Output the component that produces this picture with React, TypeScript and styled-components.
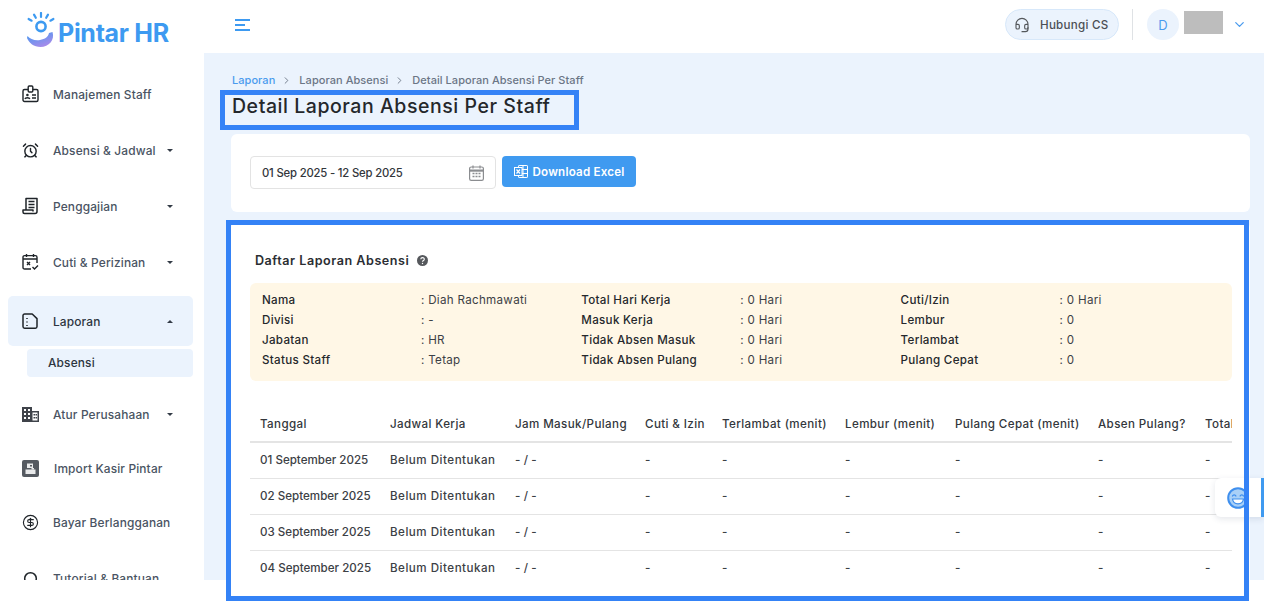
import React from "react";
import styled, { createGlobalStyle } from "styled-components";
import { AlarmClock, ChevronDown, ChevronRight, CircleDollarSign, Headset } from "lucide-react";

const GlobalStyle = createGlobalStyle`
  html, body {
    margin: 0;
    padding: 0;
    background: #fff;
    font-family: Inter, "Noto Sans", sans-serif;
  }
  * { box-sizing: border-box; }
`;

const Page = styled.div`
  position: relative;
  width: 1264px;
  height: 609px;
  overflow: hidden;
  background: #fff;
`;

const Frame = styled.div`
  display: flex;
  height: 580px;
  overflow: hidden;
`;

/* sidebar */
const Sidebar = styled.aside`
  flex: 0 0 204px;
  height: 580px;
  overflow: hidden;
  background: #fff;
`;

const LogoRow = styled.div`
  display: flex;
  align-items: flex-start;
  height: 66px;
  padding: 12px 0 0 26px;
`;

const LogoText = styled.span`
  margin: 6px 0 0 2px;
  font-size: 25px;
  line-height: 30px;
  font-weight: 700;
  letter-spacing: -0.3px;
  color: #3d9af1;
`;

const NavItem = styled.div<{ $h?: number; $active?: boolean; $mt?: number }>`
  display: flex;
  align-items: center;
  height: ${(p) => p.$h ?? 54}px;
  margin: ${(p) => p.$mt ?? 0}px 11px 0 8px;
  padding: 0 18px 0 14px;
  border-radius: 5px;
  background: ${(p) => (p.$active ? "#ebf3fd" : "transparent")};
  color: #1f2429;
`;

const NavIcon = styled.span`
  display: flex;
  width: 17px;
  height: 18px;
  align-items: center;
  justify-content: center;
  flex: none;
`;

const NavLabel = styled.span<{ $dark?: boolean; $x?: number }>`
  margin-left: ${(p) => p.$x ?? 14}px;
  font-size: 11.9px;
  font-weight: 500;
  letter-spacing: 0.15px;
  white-space: nowrap;
  color: ${(p) => (p.$dark ? "#2d3540" : "#4a5463")};
`;

const Caret = styled.span<{ $up?: boolean }>`
  margin-left: auto;
  margin-right: 2px;
  width: 0;
  height: 0;
  border-left: 3px solid transparent;
  border-right: 3px solid transparent;
  ${(p) => (p.$up ? "border-bottom: 3px solid #333b46;" : "border-top: 3px solid #333b46;")}
`;

const SubItem = styled.div`
  display: flex;
  align-items: center;
  height: 28px;
  margin: 3px 11px 10px 27px;
  padding: 0 0 2px 21px;
  border-radius: 4px;
  background: #ebf3fd;
  font-size: 11.9px;
  font-weight: 500;
  letter-spacing: 0.15px;
  color: #2d3540;
`;

/* main column */
const Main = styled.div`
  flex: 1;
  min-width: 0;
  display: flex;
  flex-direction: column;
`;

const Topbar = styled.header`
  display: flex;
  align-items: center;
  flex: 0 0 53px;
  padding: 0 17px 4px 31px;
  background: #fff;
`;

const MenuButton = styled.div`
  display: flex;
  flex-direction: column;
  gap: 3px;
  width: 15px;
`;

const MenuLine = styled.i<{ $w: number }>`
  display: block;
  width: ${(p) => p.$w}px;
  height: 2px;
  background: #3d9af1;
`;

const TopRight = styled.div`
  display: flex;
  align-items: center;
  margin-left: auto;
`;

const CsPill = styled.div`
  display: flex;
  align-items: center;
  width: 114px;
  height: 31px;
  padding-left: 8px;
  gap: 10px;
  border: 1px solid #d7e8fa;
  border-radius: 16px;
  background: #ebf3fd;
  font-size: 11.6px;
  font-weight: 500;
  letter-spacing: 0.25px;
  color: #4b4f55;
`;

const Divider = styled.div`
  width: 1px;
  height: 31px;
  margin: 0 14px 0 13px;
  background: #dfe2e5;
`;

const Avatar = styled.div`
  display: flex;
  align-items: center;
  justify-content: center;
  width: 32px;
  height: 31px;
  border-radius: 50%;
  background: #ebf3fd;
  font-size: 13px;
  color: #4a9bee;
`;

const UserMask = styled.div`
  width: 39px;
  height: 23px;
  margin: 0 9px 4px 5px;
  background: #bdbdbd;
`;

const Content = styled.main`
  flex: 1;
  padding: 20px 14px 0 27px;
  background: #ebf3fd;
  overflow: hidden;
`;

const Crumbs = styled.nav`
  display: flex;
  align-items: center;
  height: 14px;
  margin-left: 1px;
  font-size: 11px;
  font-weight: 500;
  letter-spacing: 0.05px;
  color: #6b7686;
`;

const CrumbLink = styled.span`
  color: #4a9bee;
`;

const CrumbSep = styled.span`
  display: flex;
  margin: 0 7px 0 6px;
  color: #6b7686;
`;

const Title = styled.h1`
  margin: 6px 0 0 1px;
  height: 27px;
  font-size: 19.5px;
  line-height: 27px;
  font-weight: 500;
  letter-spacing: 0.55px;
  white-space: nowrap;
  color: #24272b;
`;

const Card = styled.section`
  background: #fff;
  border-radius: 6px;
`;

const FilterCard = styled(Card)`
  display: flex;
  align-items: flex-start;
  gap: 6px;
  height: 78px;
  margin-top: 14px;
  padding: 22px 19px;
`;

const DateInput = styled.div`
  display: flex;
  align-items: center;
  justify-content: space-between;
  width: 246px;
  height: 33px;
  padding: 0 11px 0 11px;
  border: 1px solid #e3e3e3;
  border-radius: 4px;
  font-size: 11.3px;
  font-weight: 500;
  letter-spacing: -0.18px;
  color: #32363b;
`;

const DownloadButton = styled.div`
  display: flex;
  align-items: center;
  justify-content: center;
  gap: 5px;
  width: 134px;
  height: 31px;
  border-radius: 4px;
  background: #3f9af0;
  font-size: 11.6px;
  font-weight: 600;
  letter-spacing: 0.2px;
  color: #fff;
`;

const ListCard = styled(Card)`
  margin-top: 10px;
  height: 400px;
  padding: 28px 18px 0 19px;
`;

const ListTitle = styled.h2`
  display: flex;
  align-items: center;
  gap: 8px;
  height: 20px;
  margin: 0 0 0 5px;
  font-size: 12.6px;
  font-weight: 600;
  letter-spacing: 0.52px;
  color: #2b2e33;
`;

const InfoBox = styled.div`
  display: grid;
  grid-template-columns: repeat(3, 319.3px);
  margin-top: 13px;
  width: 982px;
  height: 98px;
  padding: 7px 12px;
  border-radius: 6px;
  background: #fff7e6;
`;

const InfoColumn = styled.dl`
  display: grid;
  grid-template-columns: 159px 1fr;
  grid-auto-rows: 20px;
  align-items: center;
  margin: 0;
`;

const InfoLabel = styled.dt`
  font-size: 11.6px;
  font-weight: 500;
  letter-spacing: 0.3px;
  color: #25282c;
`;

const InfoValue = styled.dd`
  margin: 0;
  font-size: 11.6px;
  font-weight: 400;
  letter-spacing: 0.3px;
  color: #3c4045;
`;

const TableWrap = styled.div`
  width: 982px;
  margin-top: 25px;
  overflow: hidden;
`;

const Table = styled.table`
  width: 1082px;
  table-layout: fixed;
  border-collapse: collapse;
`;

const HeadCell = styled.th`
  height: 36px;
  padding: 0 0 0 10px;
  text-align: left;
  white-space: nowrap;
  font-size: 11.6px;
  font-weight: 500;
  letter-spacing: 0.38px;
  color: #33373c;
  border-bottom: 2px solid #e4e4e4;
`;

const BodyCell = styled.td<{ $ls?: number }>`
  height: 36px;
  padding: 0 0 0 10px;
  white-space: nowrap;
  font-size: 11.6px;
  font-weight: 500;
  letter-spacing: ${(p) => p.$ls ?? 0.1}px;
  color: #3c4045;
  border-bottom: 1px solid #e4e4e4;

  tr:last-child > & {
    border-bottom: none;
  }
`;

/* annotation frames drawn over the page */
const Highlight = styled.div<{ $x: number; $y: number; $w: number; $h: number }>`
  position: absolute;
  left: ${(p) => p.$x}px;
  top: ${(p) => p.$y}px;
  width: ${(p) => p.$w}px;
  height: ${(p) => p.$h}px;
  border: 5px solid #3482f6;
  pointer-events: none;
`;

const FeedbackTab = styled.div`
  position: absolute;
  left: 1215px;
  top: 478px;
  display: flex;
  align-items: center;
  width: 49px;
  height: 39px;
  padding-left: 12px;
  border-radius: 6px 0 0 6px;
  background: #fff;
  box-shadow: 0 2px 6px rgba(40, 60, 90, 0.12);

  &::after {
    content: "";
    position: absolute;
    right: 0;
    top: 0;
    width: 3px;
    height: 39px;
    background: #3f9af0;
  }
`;

const ColWidth = styled.col<{ $w: number }>`
  width: ${(p) => p.$w}px;
`;

const Logo = () => (
  <svg width="30" height="36" viewBox="0 0 30 36" fill="none">
    <defs>
      <linearGradient id="logoSmile" x1="0" y1="0" x2="0.6" y2="1">
        <stop offset="0%" stopColor="#3d9af1" />
        <stop offset="100%" stopColor="#a78bea" />
      </linearGradient>
    </defs>
    <g stroke="#3d9af1" strokeWidth="2.2" strokeLinecap="round">
      <path d="M15 1v4" />
      <path d="M8 2.600l1.800 3.200" />
      <path d="M22 2.600l-1.800 3.200" />
      <path d="M2.600 7l3 1.700" />
      <path d="M27.400 7l-3 1.700" />
    </g>
    <circle cx="15" cy="14.500" r="4.600" stroke="#3d9af1" strokeWidth="2.600" />
    <path d="M1.500 24C4 27 9 29 14 28c5-1 8-3 9-7l3.500-1C29 28 23 35 14.500 35 8 35 3 31 1 26z" fill="url(#logoSmile)" />
  </svg>
);

const IdBadgeIcon = () => (
  <svg width="17" height="18" viewBox="0 0 17 18" fill="none" stroke="currentColor" strokeWidth="1.4">
    <rect x="1" y="4.500" width="15" height="12" rx="1.500" />
    <rect x="6.200" y="1" width="4.600" height="6" rx="1" fill="#fff" />
    <circle cx="5.400" cy="10" r="1.300" fill="currentColor" stroke="none" />
    <path d="M3 14c.3-1.600 4.500-1.600 4.800 0" />
    <path d="M10 10h4M10 13h4" />
  </svg>
);

const ReceiptIcon = () => (
  <svg width="17" height="18" viewBox="0 0 17 18" fill="none" stroke="currentColor" strokeWidth="1.500">
    <path d="M4 13V1.500h11V14.500a2 2 0 0 1-2 2H2.500A1.500 1.500 0 0 1 1 15v-2h10v1.500" strokeLinejoin="round" />
    <path d="M6.500 4.500h6M6.500 7.500h6M6.500 10.500h6" strokeWidth="1.300" />
  </svg>
);

const CalendarCheckIcon = () => (
  <svg width="17" height="18" viewBox="0 0 17 18" fill="none" stroke="currentColor" strokeWidth="1.4">
    <path d="M9 16H2.600A1.600 1.600 0 0 1 1 14.400V4.200a1.600 1.600 0 0 1 1.600-1.600h10.800A1.600 1.600 0 0 1 15 4.200V10" />
    <path d="M4.500 1v3M11.500 1v3M1 6h14" />
    <path d="M5 9l3 3M8 9l-3 3" />
    <path d="M10.500 14l2 2 3.500-3.500" />
  </svg>
);

const ReportIcon = () => (
  <svg width="17" height="18" viewBox="0 0 17 18" fill="none" stroke="currentColor" strokeWidth="1.500">
    <path d="M2.600 2h7.600L15 6.600v8a1.600 1.600 0 0 1-1.600 1.600H2.600A1.600 1.600 0 0 1 1 14.600V3.600A1.600 1.600 0 0 1 2.600 2z" strokeLinejoin="round" />
    <path d="M5 6v1M5 9.500v1M5 13v1" />
  </svg>
);

const BuildingIcon = () => (
  <svg width="17" height="15" viewBox="0 0 17 15">
    <path d="M0 0h10v4h7v11H0z" fill="#3f434a" />
    <g fill="#fff">
      <rect x="2" y="2" width="2" height="2" />
      <rect x="6" y="2" width="2" height="2" />
      <rect x="2" y="6" width="2" height="2" />
      <rect x="6" y="6" width="2" height="2" />
      <rect x="2" y="10" width="2" height="2" />
      <rect x="6" y="10" width="2" height="2" />
      <rect x="10.500" y="5.500" width="5" height="8" />
    </g>
    <g fill="#3f434a">
      <rect x="11.500" y="7" width="1.500" height="1.500" />
      <rect x="13.500" y="7" width="1.500" height="1.500" />
      <rect x="11.500" y="10" width="1.500" height="1.500" />
      <rect x="13.500" y="10" width="1.500" height="1.500" />
    </g>
  </svg>
);

const ImportIcon = () => (
  <svg width="17" height="17" viewBox="0 0 17 17">
    <rect width="17" height="17" rx="2" fill="#555a61" />
    <rect x="5" y="3.500" width="6" height="4.500" fill="#e9eaeb" />
    <rect x="8" y="5" width="2" height="1.500" fill="#555a61" />
    <rect x="3.500" y="9.500" width="10" height="4.500" fill="#e9eaeb" />
    <rect x="9.500" y="8" width="2.500" height="1.500" fill="#e9eaeb" />
  </svg>
);

const InlineSvg = styled.svg`
  display: block;
  flex: none;
`;

const TutorialIcon = () => (
  <InlineSvg width="17" height="17" viewBox="0 0 17 17" fill="none" stroke="currentColor" strokeWidth="1.500">
    <circle cx="8.500" cy="8.500" r="5.800" />
  </InlineSvg>
);

const HelpIcon = () => (
  <InlineSvg width="11" height="11" viewBox="0 0 11 11">
    <circle cx="5.500" cy="5.500" r="5.500" fill="#55585c" />
    <path d="M3.800 4.300c0-2.200 3.500-2.200 3.500-.1 0 1.300-1.800 1.300-1.800 2.600" fill="none" stroke="#fff" strokeWidth="1.100" />
    <circle cx="5.500" cy="8.500" r=".7" fill="#fff" />
  </InlineSvg>
);

const CalendarIcon = () => (
  <svg width="15" height="16" viewBox="0 0 15 16" fill="none" stroke="#8b8d90" strokeWidth="1.200">
    <rect x=".6" y="2" width="13.800" height="13.400" rx="1.600" />
    <path d="M.6 5.600h13.800" strokeWidth="2.200" />
    <path d="M4 .4v3M11 .4v3" />
    <path d="M3.500 8.500h2M6.500 8.500h2M9.500 8.500h2M3.500 11.500h2M6.500 11.500h2M9.500 11.500h2" strokeWidth="1.600" />
  </svg>
);

const ExcelIcon = () => (
  <svg width="14" height="13" viewBox="0 0 14 13" fill="none" stroke="#fff" strokeWidth="1">
    <rect x="4.500" y=".5" width="9" height="12" rx=".6" />
    <path d="M4.500 4.500h9M4.500 8.500h9M9 .5v12" />
    <rect x=".5" y="2.500" width="7.500" height="8" fill="#3f9af0" />
    <path d="M2.500 4.500l3.500 4M6 4.500l-3.500 4" strokeWidth="1.200" />
  </svg>
);

const SmileIcon = () => (
  <svg width="22" height="22" viewBox="0 0 22 22" fill="none">
    <circle cx="11" cy="11" r="9.800" fill="#a9d0f7" stroke="#3f8fee" strokeWidth="2" />
    <path d="M5.500 9c.6-1.500 2.800-1.500 3.400 0M13.100 9c.6-1.500 2.800-1.500 3.400 0" stroke="#3f8fee" strokeWidth="1.300" strokeLinecap="round" />
    <path d="M5.500 12h11c-.4 3-2.800 4.800-5.500 4.800S5.900 15 5.500 12z" fill="#fff" stroke="#3f8fee" strokeWidth="1.200" />
  </svg>
);

const tableHead = [
  "Tanggal",
  "Jadwal Kerja",
  "Jam Masuk/Pulang",
  "Cuti & Izin",
  "Terlambat (menit)",
  "Lembur (menit)",
  "Pulang Cepat (menit)",
  "Absen Pulang?",
  "Total Jam Kerja",
];

const colWidths = [130, 125, 130, 77, 123, 110, 143, 107, 137];

const tableRows = ["01 September 2025", "02 September 2025", "03 September 2025", "04 September 2025"];

const infoColumns = [
  [
    ["Nama", ": Diah Rachmawati"],
    ["Divisi", ": -"],
    ["Jabatan", ": HR"],
    ["Status Staff", ": Tetap"],
  ],
  [
    ["Total Hari Kerja", ": 0 Hari"],
    ["Masuk Kerja", ": 0 Hari"],
    ["Tidak Absen Masuk", ": 0 Hari"],
    ["Tidak Absen Pulang", ": 0 Hari"],
  ],
  [
    ["Cuti/Izin", ": 0 Hari"],
    ["Lembur", ": 0"],
    ["Terlambat", ": 0"],
    ["Pulang Cepat", ": 0"],
  ],
];

const App: React.FC = () => {
  return (
    <Page>
      <GlobalStyle />
      <Frame>
        <Sidebar>
          <LogoRow>
            <Logo />
            <LogoText>Pintar HR</LogoText>
          </LogoRow>
          <NavItem $h={56}>
            <NavIcon><IdBadgeIcon /></NavIcon>
            <NavLabel>Manajemen Staff</NavLabel>
          </NavItem>
          <NavItem $h={56}>
            <NavIcon><AlarmClock size={19} strokeWidth={2} /></NavIcon>
            <NavLabel>Absensi & Jadwal</NavLabel>
            <Caret />
          </NavItem>
          <NavItem $h={56}>
            <NavIcon><ReceiptIcon /></NavIcon>
            <NavLabel>Penggajian</NavLabel>
            <Caret />
          </NavItem>
          <NavItem $h={56}>
            <NavIcon><CalendarCheckIcon /></NavIcon>
            <NavLabel>Cuti & Perizinan</NavLabel>
            <Caret />
          </NavItem>
          <NavItem $h={50} $mt={6} $active>
            <NavIcon><ReportIcon /></NavIcon>
            <NavLabel $dark>Laporan</NavLabel>
            <Caret $up />
          </NavItem>
          <SubItem>Absensi</SubItem>
          <NavItem>
            <NavIcon><BuildingIcon /></NavIcon>
            <NavLabel>Atur Perusahaan</NavLabel>
            <Caret />
          </NavItem>
          <NavItem>
            <NavIcon><ImportIcon /></NavIcon>
            <NavLabel $x={15}>Import Kasir Pintar</NavLabel>
          </NavItem>
          <NavItem>
            <NavIcon><CircleDollarSign size={17} strokeWidth={1.6} /></NavIcon>
            <NavLabel>Bayar Berlangganan</NavLabel>
          </NavItem>
          <NavItem $mt={2}>
            <NavIcon><TutorialIcon /></NavIcon>
            <NavLabel>Tutorial & Bantuan</NavLabel>
          </NavItem>
        </Sidebar>
        <Main>
          <Topbar>
            <MenuButton>
              <MenuLine $w={15} />
              <MenuLine $w={10} />
              <MenuLine $w={15} />
            </MenuButton>
            <TopRight>
              <CsPill>
                <Headset size={16} strokeWidth={1.7} color="#55585c" />
                Hubungi CS
              </CsPill>
              <Divider />
              <Avatar>D</Avatar>
              <UserMask />
              <ChevronDown size={15} strokeWidth={2} color="#4a9bee" />
            </TopRight>
          </Topbar>
          <Content>
            <Crumbs>
              <CrumbLink>Laporan</CrumbLink>
              <CrumbSep><ChevronRight size={11} strokeWidth={2} /></CrumbSep>
              Laporan Absensi
              <CrumbSep><ChevronRight size={11} strokeWidth={2} /></CrumbSep>
              Detail Laporan Absensi Per Staff
            </Crumbs>
            <Title>Detail Laporan Absensi Per Staff</Title>
            <FilterCard>
              <DateInput>
                01 Sep 2025 - 12 Sep 2025
                <CalendarIcon />
              </DateInput>
              <DownloadButton>
                <ExcelIcon />
                Download Excel
              </DownloadButton>
            </FilterCard>
            <ListCard>
              <ListTitle>
                Daftar Laporan Absensi
                <HelpIcon />
              </ListTitle>
              <InfoBox>
                {infoColumns.map((column, i) => (
                  <InfoColumn key={i}>
                    {column.map(([label, value]) => (
                      <React.Fragment key={label}>
                        <InfoLabel>{label}</InfoLabel>
                        <InfoValue>{value}</InfoValue>
                      </React.Fragment>
                    ))}
                  </InfoColumn>
                ))}
              </InfoBox>
              <TableWrap>
                <Table>
                  <colgroup>
                    {colWidths.map((w, i) => (
                      <ColWidth key={i} $w={w} />
                    ))}
                  </colgroup>
                  <thead>
                    <tr>
                      {tableHead.map((h) => (
                        <HeadCell key={h}>{h}</HeadCell>
                      ))}
                    </tr>
                  </thead>
                  <tbody>
                    {tableRows.map((date) => (
                      <tr key={date}>
                        <BodyCell $ls={0}>{date}</BodyCell>
                        <BodyCell $ls={0.5}>Belum Ditentukan</BodyCell>
                        <BodyCell>- / -</BodyCell>
                        <BodyCell>-</BodyCell>
                        <BodyCell>-</BodyCell>
                        <BodyCell>-</BodyCell>
                        <BodyCell>-</BodyCell>
                        <BodyCell>-</BodyCell>
                        <BodyCell>-</BodyCell>
                      </tr>
                    ))}
                  </tbody>
                </Table>
              </TableWrap>
            </ListCard>
          </Content>
        </Main>
      </Frame>
      <FeedbackTab>
        <SmileIcon />
      </FeedbackTab>
      <Highlight $x={220} $y={90} $w={359} $h={40} />
      <Highlight $x={226} $y={220} $w={1023} $h={381} />
    </Page>
  );
};

export default App;
